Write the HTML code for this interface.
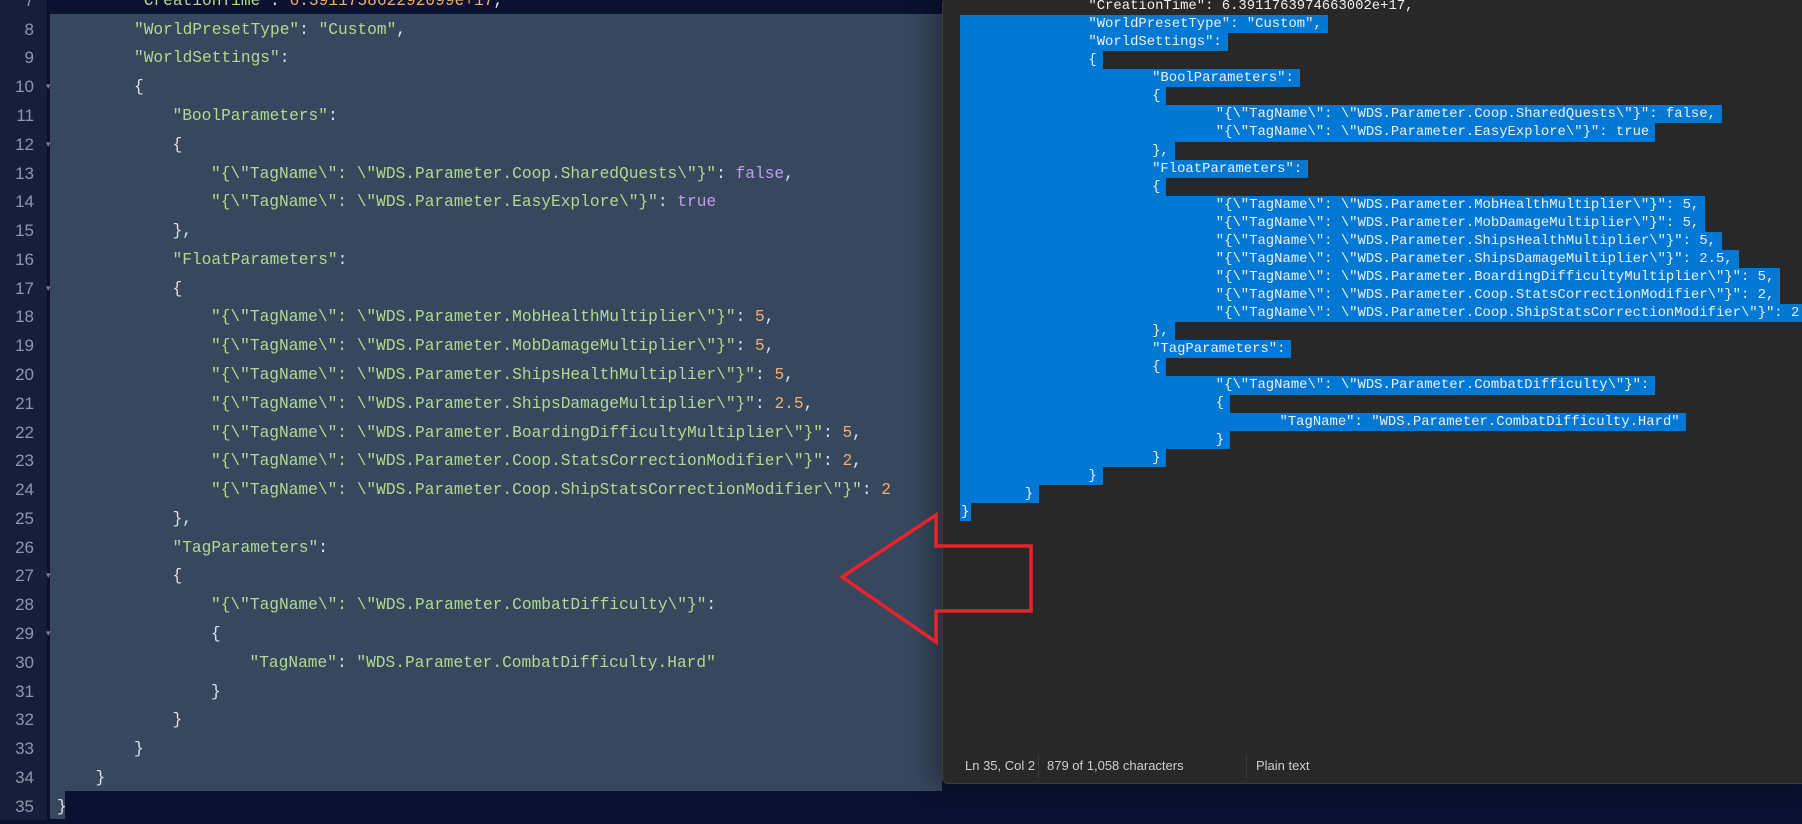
<!DOCTYPE html>
<html><head><meta charset="utf-8"><style>
body{margin:0;width:1802px;height:824px;overflow:hidden;background:#0b1130;position:relative;font-family:"Liberation Mono",monospace}
.gut{position:absolute;left:0;top:0;width:47px;height:820px;background:#161e3c}
.ln{position:absolute;left:0;width:34px;text-align:right;color:#8e97ad;font-family:"Liberation Sans",sans-serif;font-size:17px;height:28.78px;line-height:28.78px}
.fold{position:absolute;left:46px;color:#7a8298;font-size:9px;height:28.78px;line-height:28.78px}
.sel{position:absolute;left:50px;top:14px;width:892px;height:777px;background:#37475d}
.l{position:absolute;white-space:pre;font-size:16.2px;color:#dde3ee;height:28.78px;line-height:28.78px}
.s{color:#b3d98f}.n{color:#f5ad6c}.b{color:#c59af0}
.np{position:absolute;left:942px;top:-2px;width:870px;height:784px;background:#282828;border:1px solid #3a3a3a;border-radius:6px;box-shadow:-10px 0 25px rgba(0,0,0,.35)}
.r{position:absolute;left:960px;white-space:pre;font-family:"Liberation Mono",monospace;font-size:13.9px;color:#f0f0f0;height:18.1px;line-height:18.1px}
.r span{background:#0078d4;display:inline-block;padding-right:6px}
.st{position:absolute;top:758px;font-family:"Liberation Sans",sans-serif;font-size:13px;color:#cfcfcf}
.sep{position:absolute;top:754px;width:1px;height:24px;background:#3a3a3a}
</style></head><body>
<div class="sel"></div>
<div style="position:absolute;left:50px;top:791px;width:15px;height:28px;background:#37475d"></div>
<div class="gut"></div>
<div id="L"></div>
<div class="np"></div>
<div id="R"></div>
<div class="st" style="left:965px">Ln 35, Col 2</div>
<div class="sep" style="left:1038px"></div>
<div class="st" style="left:1047px">879 of 1,058 characters</div>
<div class="sep" style="left:1246px"></div>
<div class="st" style="left:1256px">Plain text</div>
<svg style="position:absolute;left:0;top:0" width="1802" height="824"><polygon points="842,577 936,515 936,546 1031,546 1031,611 936,611 936,642" fill="none" stroke="#e8232a" stroke-width="3.5" stroke-linejoin="miter"/></svg>
<script>
var q='<span class="s">',e='</span>';
function S(t){return q+t+e}
var L=[
[7,2,S('"CreationTime"')+': <span class="n">6.391175862292099e+17</span>,'],
[8,2,S('"WorldPresetType"')+': '+S('"Custom"')+','],
[9,2,S('"WorldSettings"')+':'],
[10,2,'{',1],
[11,3,S('"BoolParameters"')+':'],
[12,3,'{',1],
[13,4,S('"{\\"TagName\\": \\"WDS.Parameter.Coop.SharedQuests\\"}"')+': <span class="b">false</span>,'],
[14,4,S('"{\\"TagName\\": \\"WDS.Parameter.EasyExplore\\"}"')+': <span class="b">true</span>'],
[15,3,'},'],
[16,3,S('"FloatParameters"')+':'],
[17,3,'{',1],
[18,4,S('"{\\"TagName\\": \\"WDS.Parameter.MobHealthMultiplier\\"}"')+': <span class="n">5</span>,'],
[19,4,S('"{\\"TagName\\": \\"WDS.Parameter.MobDamageMultiplier\\"}"')+': <span class="n">5</span>,'],
[20,4,S('"{\\"TagName\\": \\"WDS.Parameter.ShipsHealthMultiplier\\"}"')+': <span class="n">5</span>,'],
[21,4,S('"{\\"TagName\\": \\"WDS.Parameter.ShipsDamageMultiplier\\"}"')+': <span class="n">2.5</span>,'],
[22,4,S('"{\\"TagName\\": \\"WDS.Parameter.BoardingDifficultyMultiplier\\"}"')+': <span class="n">5</span>,'],
[23,4,S('"{\\"TagName\\": \\"WDS.Parameter.Coop.StatsCorrectionModifier\\"}"')+': <span class="n">2</span>,'],
[24,4,S('"{\\"TagName\\": \\"WDS.Parameter.Coop.ShipStatsCorrectionModifier\\"}"')+': <span class="n">2</span>'],
[25,3,'},'],
[26,3,S('"TagParameters"')+':'],
[27,3,'{',1],
[28,4,S('"{\\"TagName\\": \\"WDS.Parameter.CombatDifficulty\\"}"')+':'],
[29,4,'{',1],
[30,5,S('"TagName"')+': '+S('"WDS.Parameter.CombatDifficulty.Hard"')],
[31,4,'}'],[32,3,'}'],[33,2,'}'],[34,1,'}'],[35,0,'}']];
var h='';
L.forEach(function(a){var y=30+(a[0]-8)*28.78-14.39;
h+='<div class="ln" style="top:'+y+'px">'+a[0]+'</div>';
if(a[3])h+='<div class="fold" style="top:'+y+'px">&#9662;</div>';
h+='<div class="l" style="top:'+y+'px;left:'+(57+a[1]*38.5)+'px">'+a[2]+'</div>';});
document.getElementById('L').innerHTML=h;
var R=[[2,'"CreationTime": 6.3911763974663002e+17,',0],
[2,'"WorldPresetType": "Custom",'],[2,'"WorldSettings":'],[2,'{'],
[3,'"BoolParameters":'],[3,'{'],
[4,'"{\\"TagName\\": \\"WDS.Parameter.Coop.SharedQuests\\"}": false,'],
[4,'"{\\"TagName\\": \\"WDS.Parameter.EasyExplore\\"}": true'],
[3,'},'],[3,'"FloatParameters":'],[3,'{'],
[4,'"{\\"TagName\\": \\"WDS.Parameter.MobHealthMultiplier\\"}": 5,'],
[4,'"{\\"TagName\\": \\"WDS.Parameter.MobDamageMultiplier\\"}": 5,'],
[4,'"{\\"TagName\\": \\"WDS.Parameter.ShipsHealthMultiplier\\"}": 5,'],
[4,'"{\\"TagName\\": \\"WDS.Parameter.ShipsDamageMultiplier\\"}": 2.5,'],
[4,'"{\\"TagName\\": \\"WDS.Parameter.BoardingDifficultyMultiplier\\"}": 5,'],
[4,'"{\\"TagName\\": \\"WDS.Parameter.Coop.StatsCorrectionModifier\\"}": 2,'],
[4,'"{\\"TagName\\": \\"WDS.Parameter.Coop.ShipStatsCorrectionModifier\\"}": 2'],
[3,'},'],[3,'"TagParameters":'],[3,'{'],
[4,'"{\\"TagName\\": \\"WDS.Parameter.CombatDifficulty\\"}":'],
[4,'{'],[5,'"TagName": "WDS.Parameter.CombatDifficulty.Hard"'],
[4,'}'],[3,'}'],[2,'}'],[1,'}'],[0,'}',2]];
h='';
R.forEach(function(a,i){var y=6+i*18.07-9.05;var pad=1+a[0]*63.7;
if(a[2]===0)h+='<div class="r" style="top:'+y+'px;padding-left:'+pad+'px">'+a[1]+'</div>';
else if(a[2]===2)h+='<div class="r" style="top:'+y+'px"><span style="padding:0 2px 0 1px">'+a[1]+'</span></div>';
else h+='<div class="r" style="top:'+y+'px"><span style="padding-left:'+pad+'px">'+a[1]+'</span></div>';});
document.getElementById('R').innerHTML=h;
</script>
</body></html>
